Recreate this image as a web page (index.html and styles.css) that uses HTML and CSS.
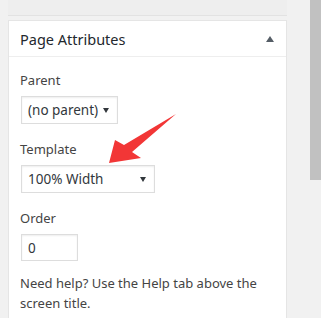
FILE: index.html
```html
<!DOCTYPE html>
<html>
<head>
<meta charset="utf-8">
<link rel="stylesheet" href="styles.css">
</head>
<body>
<div class="screen">
  <div class="main">
    <div class="prev-box"></div>
    <div class="postbox">
      <div class="postbox-header">
        <h2 class="title">Page Attributes</h2>
        <svg class="toggle" width="8" height="6" viewBox="0 0 8 6"><polygon points="4,0 8,6 0,6" fill="#555d66"/></svg>
      </div>
      <div class="inside">
        <p class="label label-first">Parent</p>
        <div class="select select-parent"><span>(no parent)</span><svg class="caret" width="6" height="5" viewBox="0 0 6 5"><polygon points="0,0 6,0 3,5" fill="#32373c"/></svg></div>
        <p class="label">Template</p>
        <div class="select select-template"><span>100% Width</span><svg class="caret" width="6" height="5" viewBox="0 0 6 5"><polygon points="0,0 6,0 3,5" fill="#32373c"/></svg></div>
        <p class="label">Order</p>
        <div class="input">0</div>
        <p class="help">Need help? Use the Help tab above the screen title.</p>
      </div>
    </div>
  </div>
  <div class="scrollbar"><div class="thumb"></div></div>
</div>
<svg class="red-arrow" width="321" height="318" viewBox="0 0 321 318"><polygon points="176,114 124,145 115,140 109,163 141,158 132,152" fill="#f23636"/></svg>
</body>
</html>
```
FILE: styles.css
```css
html, body {
  margin: 0;
  padding: 0;
  background: #f1f1f1;
}
body {
  width: 321px;
  height: 318px;
  overflow: hidden;
  position: relative;
  font-family: "Noto Sans", "Open Sans", sans-serif;
  color: #444;
}
.screen {
  display: flex;
  height: 318px;
}
.main {
  width: 309px;
  padding-left: 8px;
  box-sizing: border-box;
}
.prev-box {
  width: 279px;
  height: 16px;
  background: #eeeeee;
  border-bottom: 1px solid #e2e2e2;
  box-sizing: border-box;
}
.postbox {
  margin-top: 4px;
  width: 279px;
  background: #fff;
  border: 1px solid #e5e5e5;
  box-sizing: border-box;
  height: 300px;
}
.postbox-header {
  height: 35px;
  border-bottom: 1px solid #eeeeee;
  display: flex;
  align-items: center;
  justify-content: space-between;
  padding: 0 12px 0 11px;
}
.title {
  margin: 0;
  font-size: 14.5px;
  font-weight: 400;
  color: #23282d;
  line-height: 20px;
}
.toggle {
  display: block;
  margin-top: 1px;
}
.inside {
  padding: 0 12px 0 11px;
}
.label {
  margin: 16px 0 6px;
  font-size: 13px;
  line-height: 19px;
  color: #444;
}
.label-first {
  margin-top: 14px;
}
.select {
  margin-left: 1px;
  height: 28px;
  box-sizing: border-box;
  border: 1px solid #ddd;
  box-shadow: inset 0 1px 2px rgba(0,0,0,0.07);
  display: flex;
  align-items: center;
  justify-content: space-between;
  padding: 0 8px 0 6px;
  font-size: 13.5px;
  color: #32373c;
}
.select-parent { width: 97px; }
.select-template { width: 134px; }
.caret { display: block; }
.input {
  margin-left: 1px;
  width: 57px;
  height: 27px;
  box-sizing: border-box;
  border: 1px solid #ddd;
  box-shadow: inset 0 1px 2px rgba(0,0,0,0.07);
  display: flex;
  align-items: center;
  padding-left: 6px;
  font-size: 13.5px;
  color: #32373c;
}
.help {
  margin: 13px 0 0;
  font-size: 13px;
  line-height: 19.5px;
  color: #444;
  width: 240px;
}
.scrollbar {
  width: 12px;
  height: 318px;
  background: #f1f1f1;
}
.thumb {
  margin-left: 1px;
  width: 11px;
  height: 180px;
  background: #c1c1c1;
}
.red-arrow {
  position: absolute;
  left: 0;
  top: 0;
  pointer-events: none;
}
```
